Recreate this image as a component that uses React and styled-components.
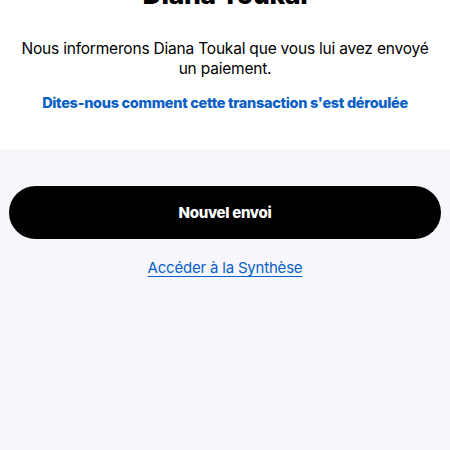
import React from "react"
import styled, { createGlobalStyle } from "styled-components"

const Global = createGlobalStyle`
  html, body {
    margin: 0;
    padding: 0;
    background: #f5f7fa;
    font-family: Inter, "Liberation Sans", sans-serif;
    color: #000;
  }
`

const Page = styled.div`
  width: 450px;
  height: 450px;
  overflow: hidden;
  display: flex;
  flex-direction: column;
`

const Top = styled.section`
  background: #fff;
  height: 149px;
  display: flex;
  flex-direction: column;
  align-items: center;
  text-align: center;
`

const Name = styled.h1`
  margin: -23px 0 0;
  font-size: 26.5px;
  line-height: 34px;
  font-weight: 800;
  letter-spacing: -0.3px;
`

const Message = styled.p`
  margin: 28px 0 0;
  padding: 0 18px;
  font-size: 15.5px;
  line-height: 20px;
  letter-spacing: -0.2px;
`

const FeedbackLink = styled.a`
  margin-top: 15px;
  color: #0a5fc7;
  font-size: 14.5px;
  font-weight: 800;
  letter-spacing: -0.3px;
  text-decoration: none;
`

const Bottom = styled.section`
  flex: 1;
  display: flex;
  flex-direction: column;
  align-items: center;
  padding: 37px 9px 0;
`

const Button = styled.button`
  width: 100%;
  height: 53px;
  border: 0;
  border-radius: 27px;
  background: #000;
  color: #fff;
  font-family: inherit;
  font-size: 15px;
  font-weight: 800;
  letter-spacing: -0.3px;
`

const SummaryLink = styled.a`
  margin-top: 19px;
  color: #0a5fc7;
  font-size: 15px;
  letter-spacing: -0.2px;
  text-decoration: underline;
  text-underline-offset: 3px;
`

export default function App() {
  return (
    <>
      <Global />
      <Page>
        <Top>
          <Name>Diana Toukal</Name>
          <Message>
            Nous informerons Diana Toukal que vous lui avez envoyé un paiement.
          </Message>
          <FeedbackLink href="#">
            Dites-nous comment cette transaction s'est déroulée
          </FeedbackLink>
        </Top>
        <Bottom>
          <Button>Nouvel envoi</Button>
          <SummaryLink href="#">Accéder à la Synthèse</SummaryLink>
        </Bottom>
      </Page>
    </>
  )
}
